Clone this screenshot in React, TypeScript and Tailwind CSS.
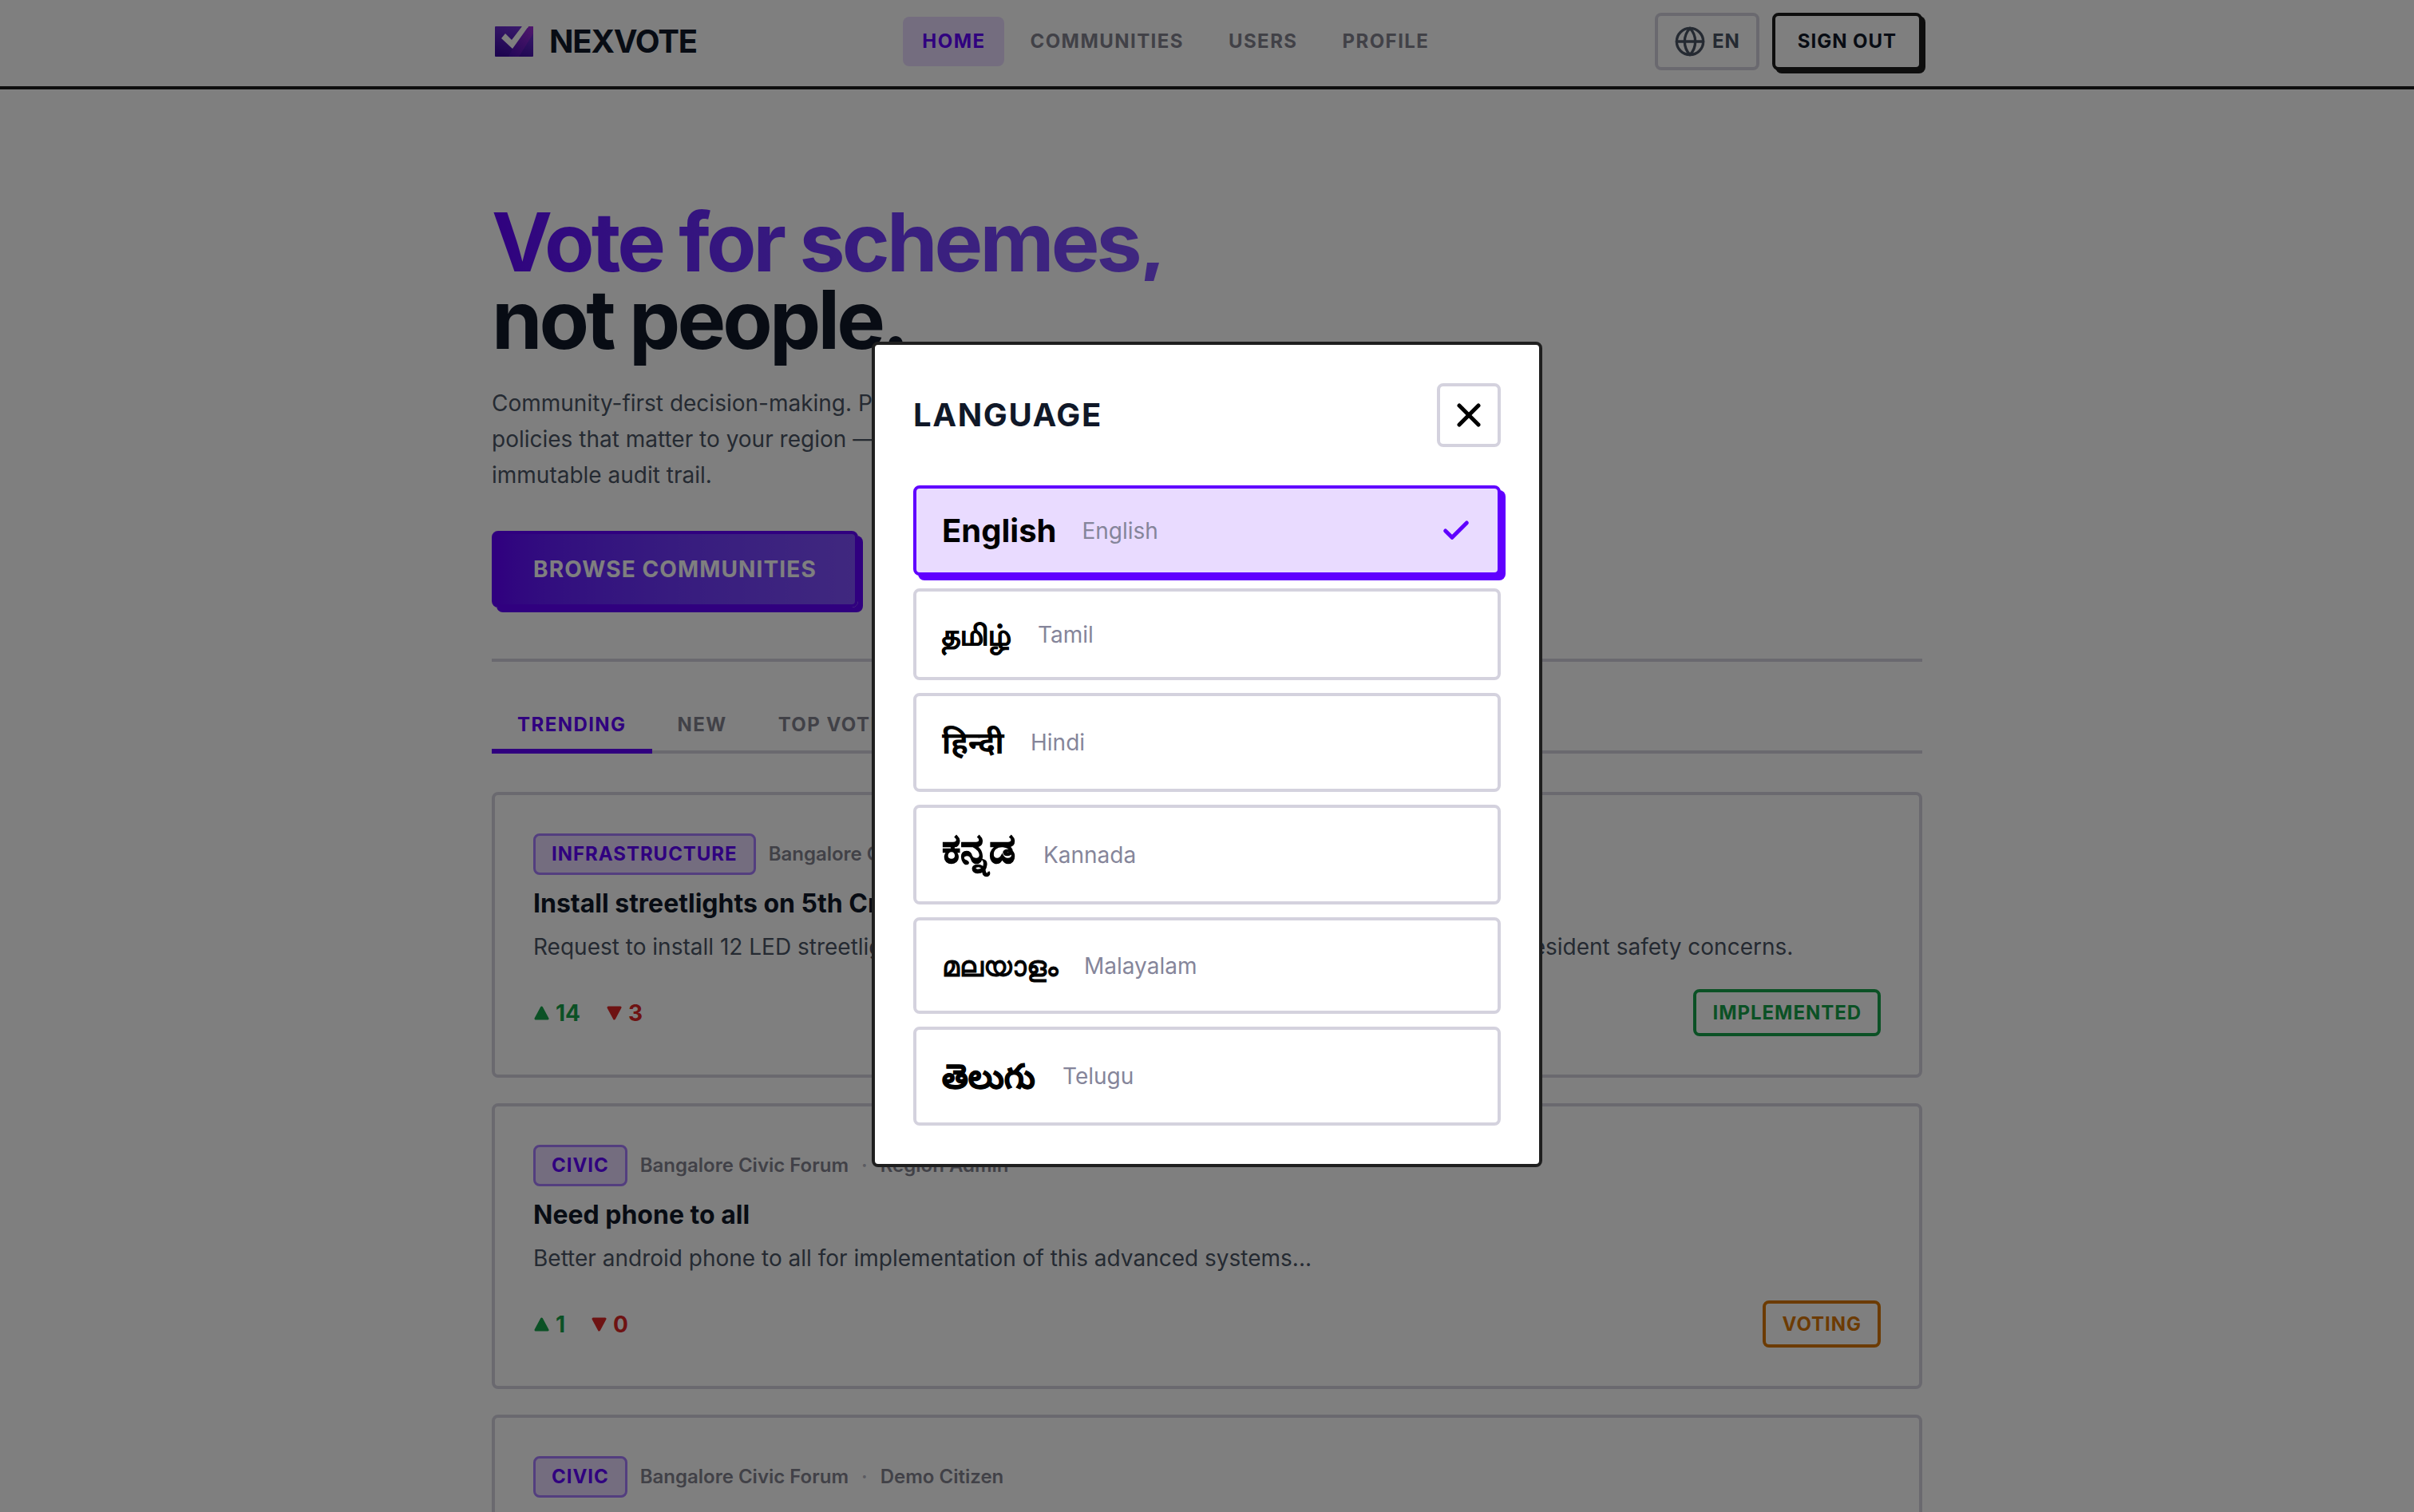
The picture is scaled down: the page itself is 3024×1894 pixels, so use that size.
import type { ReactNode } from "react";
import { Check, Globe, X } from "lucide-react";

const navItems = ["HOME", "COMMUNITIES", "USERS", "PROFILE"];
const tabs = ["TRENDING", "NEW", "TOP VOTED"];

type Scheme = {
  category: string;
  community: string;
  author: string;
  title: string;
  text: string;
  up: number;
  down: number;
  status: string;
  tone: string;
};

const schemes: Scheme[] = [
  {
    category: "INFRASTRUCTURE",
    community: "Bangalore Civic Forum",
    author: "Region Admin",
    title: "Install streetlights on 5th Cross Road",
    text: "Request to install 12 LED streetlights near 5th Cross Road between park and main road due to resident safety concerns.",
    up: 14,
    down: 3,
    status: "IMPLEMENTED",
    tone: "border-[#16a34a] text-[#16a34a]",
  },
  {
    category: "CIVIC",
    community: "Bangalore Civic Forum",
    author: "Region Admin",
    title: "Need phone to all",
    text: "Better android phone to all for implementation of this advanced systems...",
    up: 1,
    down: 0,
    status: "VOTING",
    tone: "border-[#d97706] text-[#d97706]",
  },
  {
    category: "CIVIC",
    community: "Bangalore Civic Forum",
    author: "Demo Citizen",
    title: "Community water station",
    text: "Set up a shared drinking water station near the bus stand.",
    up: 2,
    down: 0,
    status: "VOTING",
    tone: "border-[#d97706] text-[#d97706]",
  },
];

type Language = { native: string; name: string; lang: string; style: string; row: string };

const languages: Language[] = [
  { native: "English", name: "English", lang: "en", style: "text-[40px] font-bold", row: "min-h-[113px]" },
  { native: "தமிழ்", name: "Tamil", lang: "ta", style: "min-w-[88px] text-[36px] font-bold [-webkit-text-stroke:1px_black]", row: "min-h-[115px]" },
  { native: "हिन्दी", name: "Hindi", lang: "hi", style: "min-w-[79px] text-[38px] font-bold", row: "min-h-[124px]" },
  { native: "ಕನ್ನಡ", name: "Kannada", lang: "kn", style: "min-w-[95px] pb-4 text-[52px] font-bold [-webkit-text-stroke:1px_black]", row: "min-h-[125px]" },
  { native: "മലയാളം", name: "Malayalam", lang: "ml", style: "min-w-[146px] text-[35px] font-medium [-webkit-text-stroke:1px_black]", row: "min-h-[121px]" },
  { native: "తెలుగు", name: "Telugu", lang: "te", style: "min-w-[119px] text-[42px] font-bold [-webkit-text-stroke:1px_black]", row: "min-h-[124px]" },
];

function Container({ children, className = "" }: { children: ReactNode; className?: string }) {
  return <div className={`mx-auto w-full max-w-[1792px] ${className}`}>{children}</div>;
}

function Logo() {
  return (
    <svg viewBox="0 0 48 38" className="h-[38px] w-12" aria-hidden="true">
      <defs>
        <linearGradient id="logo-fill" x1="0.7" y1="0" x2="0.3" y2="1">
          <stop offset="0" stopColor="#7434d8" />
          <stop offset="1" stopColor="#3a0aa0" />
        </linearGradient>
        <linearGradient id="logo-edge" x1="1" y1="0" x2="0" y2="1">
          <stop offset="0" stopColor="#b02ad8" />
          <stop offset="1" stopColor="#4a10b8" />
        </linearGradient>
      </defs>
      <rect width="48" height="38" rx="1" fill="url(#logo-fill)" />
      <path d="M42 0H48V9L30 38H17L22 28Z" fill="url(#logo-edge)" opacity="0.7" />
      <path d="M35 -1H42.500L41 2L33 0Z" fill="#fff" />
      <path d="M8 15L13 9L21 17L34 0H42L22 28Z" fill="#fff" />
    </svg>
  );
}

function Header() {
  return (
    <header className="border-b-4 border-[#1c1c1c] bg-white pb-1">
      <Container className="flex h-[104px] items-center justify-between">
        <a href="#home" className="flex items-center gap-5 pl-1 text-[40px] leading-none font-bold tracking-[-0.03em] text-gray-900">
          <Logo />
          NEXVOTE
        </a>
        <nav className="flex gap-2">
          {navItems.map((item, i) => (
            <a
              key={item}
              href={`#${item.toLowerCase()}`}
              className={`rounded-lg px-6 py-4 text-[24px] leading-[30px] font-bold tracking-[0.06em] ${i === 0 ? "bg-[#e9dbff] text-[#6000ff]" : "text-[#83838f]"}`}
            >
              {item}
            </a>
          ))}
        </nav>
        <div className="flex gap-4">
          <button className="flex h-[72px] items-center gap-2 rounded-lg border-4 border-[#d4d2de] px-5 text-[24px] font-bold tracking-[0.04em] text-gray-600">
            <Globe size={40} strokeWidth={2} />
            EN
          </button>
          <button className="h-[72px] rounded-lg border-4 border-[#1c1c1c] bg-white px-7 text-[24px] font-bold tracking-[0.04em] text-gray-900 shadow-[4px_4px_0_#1c1c1c]">
            SIGN OUT
          </button>
        </div>
      </Container>
    </header>
  );
}

function Hero() {
  return (
    <section className="border-b-4 border-[#d4d2de] pt-[143px] pb-16">
      <h1 className="text-[102px] leading-[97px] font-bold tracking-[-0.038em] text-gray-900">
        <span className="inline-block bg-linear-to-r from-[#6000ff] to-[#8050ff] bg-clip-text text-transparent">Vote for schemes,</span>
        <br />
        not people.
      </h1>
      <p className="mt-[34px] max-w-[920px] text-[28px] leading-[45px] text-gray-600">
        Community-first decision-making. Propose, debate, and vote on policies that matter to your region — with transparent results and an
        immutable audit trail.
      </p>
      <button className="mt-[47px] rounded-lg border-4 border-[#6000ff] bg-linear-to-r from-[#6000ff] to-[#8050ff] px-12 py-6 text-[28px] leading-10 font-bold tracking-[0.04em] text-white shadow-[6px_6px_0_#6000ff]">
        BROWSE COMMUNITIES
      </button>
    </section>
  );
}

function Tabs() {
  return (
    <div role="tablist" className="mt-12 flex shadow-[inset_0_-4px_0_#d4d2de]">
      {tabs.map((tab, i) => (
        <button
          key={tab}
          role="tab"
          aria-selected={i === 0}
          className={`border-b-6 px-8 py-4 text-[24px] leading-[29px] font-bold tracking-[0.06em] ${i === 0 ? "border-[#6000ff] text-[#6000ff]" : "border-transparent text-[#83838f]"}`}
        >
          {tab}
        </button>
      ))}
    </div>
  );
}

function Votes({ up, down }: { up: number; down: number }) {
  return (
    <div className="flex gap-8 text-[28px] leading-[34px] font-bold">
      <span className="flex items-center gap-2 text-[#16a34a]">
        <svg viewBox="0 0 20 20" className="size-5" fill="currentColor" stroke="currentColor" strokeWidth="3" strokeLinejoin="round" aria-label="Up votes">
          <path d="M10.5 3L18 17H3Z" />
        </svg>
        {up}
      </span>
      <span className="flex items-center gap-2 text-[#dc2626]">
        <svg viewBox="0 0 20 20" className="size-5" fill="currentColor" stroke="currentColor" strokeWidth="3" strokeLinejoin="round" aria-label="Down votes">
          <path d="M10.5 17L18 3H3Z" />
        </svg>
        {down}
      </span>
    </div>
  );
}

function SchemeCard({ scheme }: { scheme: Scheme }) {
  return (
    <article className="rounded-lg border-4 border-[#d4d2de] bg-white p-12">
      <div className="flex items-center gap-4 text-[24px] leading-[30px] font-semibold text-[#83838f]">
        <span className="rounded-lg border-3 border-[#a67cff] bg-[#e9dbff] px-5 py-2 font-bold tracking-[0.04em] text-[#6000ff]">{scheme.category}</span>
        <span>{scheme.community}</span>
        <span className="text-[#b8b8c4]">·</span>
        <span>{scheme.author}</span>
      </div>
      <h2 className="mt-4 text-[32px] leading-10 font-bold text-gray-900">{scheme.title}</h2>
      <p className="mt-3 text-[28px] leading-[45px] text-gray-600">{scheme.text}</p>
      <div className="mt-[30px] flex items-center justify-between">
        <Votes up={scheme.up} down={scheme.down} />
        <span className={`rounded-lg border-4 px-5 py-3 text-[24px] leading-[27px] font-bold tracking-[0.04em] ${scheme.tone}`}>{scheme.status}</span>
      </div>
    </article>
  );
}

function LanguageDialog() {
  return (
    <div className="fixed inset-0 flex items-center justify-center bg-black/50 pb-1">
      <div role="dialog" aria-modal="true" aria-labelledby="language-title" className="w-full max-w-[840px] rounded-lg border-4 border-[#1f1f1f] bg-white p-12">
        <div className="flex items-center justify-between">
          <h2 id="language-title" className="text-[40px] leading-none font-bold tracking-[0.04em] text-gray-900">
            LANGUAGE
          </h2>
          <button aria-label="Close" className="flex size-20 items-center justify-center rounded-lg border-4 border-[#d4d2de] text-black">
            <X size={48} strokeWidth={2.5} />
          </button>
        </div>
        <div className="mt-12 flex flex-col gap-4">
          {languages.map((l, i) => (
            <button
              key={l.lang}
              aria-pressed={i === 0}
              className={`flex items-center gap-8 rounded-lg border-4 px-8 text-left ${l.row} ${i === 0 ? "border-[#6000ff] bg-[#e9dbff] shadow-[6px_6px_0_#6000ff]" : "border-[#d4d2de] bg-white"}`}
            >
              <span lang={l.lang} className={`leading-[48px] text-black ${l.style}`}>
                {l.native}
              </span>
              <span className="text-[28px] leading-9 text-[#85859a]">{l.name}</span>
              {i === 0 && <Check size={40} strokeWidth={3} className="ml-auto text-[#6000ff]" />}
            </button>
          ))}
        </div>
      </div>
    </div>
  );
}

export default function App() {
  return (
    <div className="h-screen overflow-hidden bg-white font-[Inter,'Noto_Sans',sans-serif]">
      <Header />
      <Container>
        <Hero />
        <Tabs />
        <main className="mt-12 flex flex-col gap-8">
          {schemes.map((s) => (
            <SchemeCard key={s.title} scheme={s} />
          ))}
        </main>
      </Container>
      <LanguageDialog />
    </div>
  );
}
